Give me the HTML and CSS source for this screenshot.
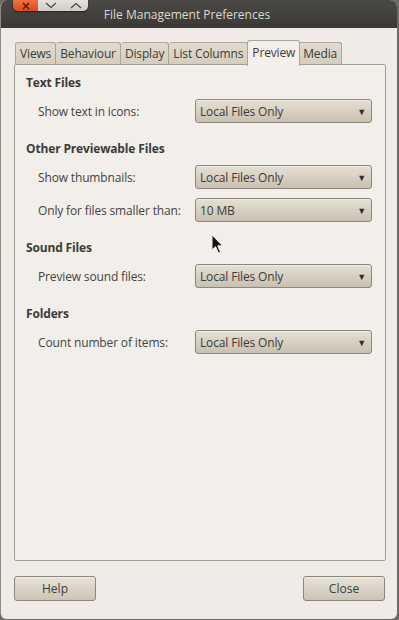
FILE: index.html
```html
<!DOCTYPE html>
<html lang="en">
<head>
    <meta charset="UTF-8">
    <title>File Management Preferences</title>
    <link rel="stylesheet" href="styles.css">
</head>
<body>
    <div class="window">
        <div class="titlebar">
            <div class="win-buttons">
                <span class="win-btn close-btn">
                    <svg width="10" height="8" viewBox="0 0 10 8"><path d="M2 1 L8 7 M8 1 L2 7" stroke="#5a1a08" stroke-width="1.6"/></svg>
                </span>
                <span class="win-btn">
                    <svg width="12" height="7" viewBox="0 0 12 7"><path d="M1 1 L6 5.5 L11 1" stroke="#4a4842" stroke-width="1.3" fill="none"/></svg>
                </span>
                <span class="win-btn">
                    <svg width="12" height="7" viewBox="0 0 12 7"><path d="M1 6 L6 1.5 L11 6" stroke="#4a4842" stroke-width="1.3" fill="none"/></svg>
                </span>
            </div>
            <div class="title">File Management Preferences</div>
        </div>

        <div class="content">
            <div class="tabs">
                <div class="tab">Views</div>
                <div class="tab">Behaviour</div>
                <div class="tab">Display</div>
                <div class="tab">List Columns</div>
                <div class="tab active">Preview</div>
                <div class="tab">Media</div>
            </div>

            <div class="panel">
                <div class="section">
                    <div class="heading">Text Files</div>
                    <div class="row">
                        <span class="label">Show text in icons:</span>
                        <div class="combo"><span>Local Files Only</span><span class="arrow">▼</span></div>
                    </div>
                </div>

                <div class="section">
                    <div class="heading">Other Previewable Files</div>
                    <div class="row">
                        <span class="label">Show thumbnails:</span>
                        <div class="combo"><span>Local Files Only</span><span class="arrow">▼</span></div>
                    </div>
                    <div class="row">
                        <span class="label">Only for files smaller than:</span>
                        <div class="combo"><span>10 MB</span><span class="arrow">▼</span></div>
                    </div>
                </div>

                <div class="section">
                    <div class="heading">Sound Files</div>
                    <div class="row">
                        <span class="label">Preview sound files:</span>
                        <div class="combo"><span>Local Files Only</span><span class="arrow">▼</span></div>
                    </div>
                </div>

                <div class="section">
                    <div class="heading">Folders</div>
                    <div class="row">
                        <span class="label">Count number of items:</span>
                        <div class="combo"><span>Local Files Only</span><span class="arrow">▼</span></div>
                    </div>
                </div>
            </div>

            <div class="actions">
                <button class="btn">Help</button>
                <button class="btn">Close</button>
            </div>
        </div>

        <!-- mouse pointer over the panel -->
        <svg class="cursor" width="14" height="22" viewBox="0 0 14 22">
            <path d="M1 1 L1 16 L4.5 12.5 L7.5 19 L9.5 18 L6.7 11.8 L11.5 11.8 Z" fill="#111" stroke="#eee" stroke-width="1"/>
        </svg>
    </div>
</body>
</html>
```

FILE: styles.css
```css
body {
    margin: 0;
    background-color: #6b6a66;
    font-family: "Open Sans", sans-serif;
    font-size: 12px;
    letter-spacing: -0.15px;
    color: #3c3b37;
}

.window {
    position: relative;
    width: 397px;
    height: 619px;
    background-color: #f0ebe6;
    border-radius: 7px 7px 6px 6px;
    border-left: 1px solid #8d8a84;
    box-sizing: border-box;
    overflow: hidden;
    display: flex;
    flex-direction: column;
}

.titlebar {
    height: 28px;
    background: linear-gradient(#4a4945, #3a3935);
    display: flex;
    align-items: flex-start;
    position: relative;
}

.win-buttons {
    display: flex;
    margin-left: 12px;
    border-radius: 0 0 5px 5px;
    overflow: hidden;
    box-shadow: 0 1px 2px rgba(0, 0, 0, 0.5);
}

.win-btn {
    width: 25px;
    height: 11px;
    display: flex;
    align-items: center;
    justify-content: center;
    background: linear-gradient(#e4e2dc, #cfccc5);
}

.close-btn {
    background: linear-gradient(#f3703f, #dc4a1a);
}

.title {
    position: absolute;
    left: 0;
    right: 0;
    top: 6px;
    text-align: center;
    color: #dcd8cf;
    font-size: 12px;
    letter-spacing: 0;
    padding-right: 24px;
}

.content {
    flex: 1;
    padding: 12px 11px 0 13px;
    display: flex;
    flex-direction: column;
}

.tabs {
    display: flex;
    align-items: flex-end;
    height: 26px;
    padding-left: 1px;
    position: relative;
    z-index: 1;
    margin-bottom: -2px;
}

.tab {
    height: 21px;
    line-height: 21px;
    padding: 0 4px;
    background: linear-gradient(#e1dbcf, #d5cebf);
    border: 1px solid #aaa595;
    border-bottom: none;
    border-radius: 3px 3px 0 0;
    color: #3c3b37;
    margin-bottom: 2px;
}

.tab + .tab {
    border-left: none;
}

.tab.active {
    height: 25px;
    line-height: 23px;
    background: #f3f0eb;
    border-left: 1px solid #aaa595;
    margin: 0 -1px 0 -1px;
    position: relative;
}

.panel {
    height: 497px;
    box-sizing: border-box;
    border: 1px solid #a29e95;
    border-radius: 2px;
    background-color: #f2eee9;
    padding: 10px 12px 0 11px;
    display: flex;
    flex-direction: column;
    gap: 18px;
}

.section {
    display: flex;
    flex-direction: column;
    gap: 9px;
}

.heading {
    font-weight: bold;
    height: 16px;
    line-height: 16px;
    margin-bottom: -1px;
}

.row {
    display: flex;
    align-items: center;
    padding-left: 12px;
}

.label {
    width: 157px;
    color: #45443f;
}

.combo {
    width: 177px;
    height: 24px;
    box-sizing: border-box;
    border: 1px solid #8c877b;
    border-radius: 3px;
    background: linear-gradient(#e6e0d4, #c8c0b1);
    box-shadow: inset 0 1px 0 rgba(255, 255, 255, 0.4);
    display: flex;
    align-items: center;
    justify-content: space-between;
    padding: 0 5px 0 4px;
    color: #3c3b37;
}

.arrow {
    font-size: 9px;
    color: #2f2e2a;
}

.actions {
    display: flex;
    justify-content: space-between;
    margin-top: 15px;
    padding-right: 1px;
}

.btn {
    width: 82px;
    height: 25px;
    font-family: inherit;
    font-size: 12px;
    color: #3c3b37;
    border: 1px solid #8c877b;
    border-radius: 3px;
    background: linear-gradient(#e8e3d9, #cbc4b6);
    box-shadow: inset 0 1px 0 rgba(255, 255, 255, 0.4);
    padding: 0;
}

.cursor {
    position: absolute;
    left: 210px;
    top: 234px;
}
```
